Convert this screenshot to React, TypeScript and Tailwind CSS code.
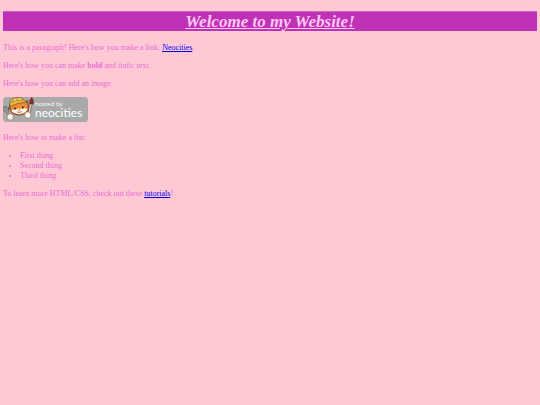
const THINGS = ["First thing", "Second thing", "Third thing"];

function NeocitiesBadge() {
  return (
    <svg
      viewBox="0 0 85 25"
      className="h-[25px] w-[85px]"
      role="img"
      aria-label="Hosted by Neocities"
    >
      <rect width="85" height="25" rx="3.5" fill="#a9a9a9" />

      {/* fork */}
      <path
        d="M1.2 10.4 L1.6 13.6 L4.4 15.2 L6.4 19 M3.2 10 L4.4 15.2 M6 10.6 L4.4 15.2"
        fill="none"
        stroke="#6a6462"
        strokeWidth="1.8"
        strokeLinecap="round"
      />
      <path
        d="M1.4 10.8 L1.8 13.4 L4.4 14.8 L6.4 18.6 M3.4 10.4 L4.4 14.6"
        fill="none"
        stroke="#d0ccc8"
        strokeWidth="0.7"
      />

      {/* brush */}
      <path d="M28.2 7 L25.6 17" stroke="#6b4638" strokeWidth="2.6" strokeLinecap="round" />
      <path d="M28.2 7 L25.6 17" stroke="#f1e6d8" strokeWidth="1.2" />
      <path d="M28.8 0.4 Q31 3.4 30 7 L26.8 6.6 Q26.2 2.8 28.8 0.4Z" fill="#a62a2c" stroke="#54202a" strokeWidth="0.7" />

      {/* cat */}
      <path
        d="M7 12 L6.8 6.4 L12 5.4 L20 5.4 L24.6 3.8 L25.4 10.8 Q25 16.6 16.6 18 Q8.4 17.8 7 12Z"
        fill="#ee8a32"
        stroke="#5d3420"
        strokeWidth="0.9"
      />
      <path d="M8.2 13.6 Q9.6 12.2 12.6 12.4 L15.8 11.4 L19.8 11.4 Q22.6 11 24.6 12 Q23 16.4 16.4 17.2 Q10 17 8.2 13.6Z" fill="#fff2df" />
      <circle cx="12" cy="11.4" r="1" fill="#402418" />
      <circle cx="19.8" cy="10.4" r="1" fill="#402418" />
      <path d="M15.2 12.8 L17.4 12.6 L16.4 14Z" fill="#9a3e2c" />
      <path d="M14.2 15 Q16.4 16 18.6 14.6" fill="none" stroke="#79402b" strokeWidth="0.7" />

      {/* hard hat */}
      <path
        d="M6.4 8 Q6.6 2.8 11.2 1 Q17.6 -0.8 21 2.6 L23.6 5.4 L15 6.4 L8.4 9Z"
        fill="#e5b843"
        stroke="#755020"
        strokeWidth="0.7"
      />
      <path d="M8.4 5.2 Q14 2 20.6 3.4" fill="none" stroke="#9b7125" strokeWidth="0.7" />
      <path d="M11.6 1.6 L12.4 4 M16.4 0.8 L16.8 3.2" stroke="#fae37a" strokeWidth="1" />

      {/* paws */}
      <circle cx="7.2" cy="20" r="3.2" fill="#fff6ea" stroke="#806450" strokeWidth="0.6" />
      <circle cx="24.8" cy="18" r="3.2" fill="#fff6ea" stroke="#806450" strokeWidth="0.6" />

      <text x="32" y="9" fontSize="6" fill="#ffffff" fontFamily="'Open Sans', sans-serif">
        hosted by
      </text>
      <text x="32" y="20" fontSize="12" fill="#ffffff" fontFamily="Lato, sans-serif">
        neocities
      </text>
    </svg>
  );
}

export default function App() {
  return (
    <main className="min-h-screen bg-[#ffc8d5] px-[3px] pt-[11px] font-['Liberation_Serif',serif] text-[8px] leading-[10px] text-[#e96fd6]">
      <h1 className="mb-3 border-t border-[#cb67bd] bg-[#c032b5] text-center text-[17px] leading-[19px] font-bold text-[#ffc8f8] italic underline">
        Welcome to my Website!
      </h1>

      <div className="flex flex-col gap-2">
        <p>
          This is a paragraph! Here's how you make a link:{" "}
          <a href="https://neocities.org" className="text-[#0000ee] underline">
            Neocities
          </a>
          .
        </p>
        <p>
          Here's how you can make <strong>bold</strong> and <em>italic</em> text.
        </p>
        <p>Here's how you can add an image:</p>
        <NeocitiesBadge />
      </div>

      <div className="flex flex-col gap-2 pt-[11px]">
        <p>Here's how to make a list:</p>
        <ul className="list-disc pl-[17px]">
          {THINGS.map((thing) => (
            <li key={thing}>{thing}</li>
          ))}
        </ul>
        <p>
          To learn more HTML/CSS, check out these{" "}
          <a href="https://neocities.org/tutorials" className="text-[#0000ee] underline">
            tutorials
          </a>
          !
        </p>
      </div>
    </main>
  );
}
